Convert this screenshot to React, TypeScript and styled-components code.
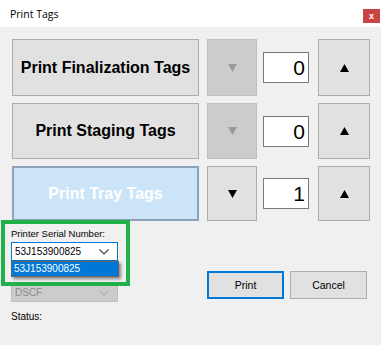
import React from "react";
import styled, { createGlobalStyle } from "styled-components";

const GlobalStyle = createGlobalStyle`
  html, body {
    margin: 0;
    padding: 0;
    background: #f0f0f0;
  }
  * {
    box-sizing: border-box;
  }
`;

interface ICounter {
  label: string;
  value: number;
  active?: boolean;
}

const counters: ICounter[] = [
  { label: "Print Finalization Tags", value: 0 },
  { label: "Print Staging Tags", value: 0 },
  { label: "Print Tray Tags", value: 1, active: true },
];

const Triangle = ({ up, color }: { up?: boolean; color: string }) => (
  <svg width="9" height="8" viewBox="0 0 9 8">
    <polygon points={up ? "4.5,0 9,8 0,8" : "0,0 9,0 4.5,8"} fill={color} />
  </svg>
);

const Chevron = ({ color }: { color: string }) => (
  <svg width="10" height="6" viewBox="0 0 10 6">
    <polyline points="0.5,0.5 5,5 9.5,0.5" fill="none" stroke={color} strokeWidth="1.2" />
  </svg>
);

export default function App() {
  return (
    <>
      <GlobalStyle />
      <Window>
        <TitleBar>
          <Title>Print Tags</Title>
          <CloseButton>x</CloseButton>
        </TitleBar>
        <Body>
          <Rows>
            {counters.map(c => (
              <React.Fragment key={c.label}>
                <BigButton active={c.active}>{c.label}</BigButton>
                <StepButton disabled={!c.active}>
                  <Triangle color={c.active ? "#000" : "#9a9a9a"} />
                </StepButton>
                <CountBox>{c.value}</CountBox>
                <StepButton>
                  <Triangle up color="#000" />
                </StepButton>
              </React.Fragment>
            ))}
          </Rows>
          <Lower>
            <Fields>
              <FieldLabel>Printer Serial Number:</FieldLabel>
              <SelectWrap>
                <Select focused>
                  <span>53J153900825</span>
                  <Chevron color="#444" />
                </Select>
                <DropList>
                  <DropItem>53J153900825</DropItem>
                </DropList>
              </SelectWrap>
              <Select disabled>
                <span>DSCF</span>
                <Chevron color="#b4b4b4" />
              </Select>
              <StatusLabel>Status:</StatusLabel>
            </Fields>
            <Actions>
              <ActionButton focused>Print</ActionButton>
              <ActionButton>Cancel</ActionButton>
            </Actions>
          </Lower>
        </Body>
        <Highlight />
      </Window>
    </>
  );
}

const Window = styled.div`
  position: relative;
  width: 381px;
  height: 345px;
  background: #f0f0f0;
  font-family: "Liberation Sans", Arial, sans-serif;
  overflow: hidden;
`;

const TitleBar = styled.div`
  height: 27px;
  background: #ffffff;
  display: flex;
  align-items: center;
  justify-content: space-between;
  padding: 0 1px 0 10px;
`;

const Title = styled.div`
  font-family: "Open Sans", "Noto Sans", sans-serif;
  font-size: 10.5px;
  color: #000;
  margin-top: 1px;
`;

const CloseButton = styled.div`
  width: 17px;
  height: 14px;
  background: #c94545;
  color: #fff;
  font-size: 9px;
  font-weight: bold;
  display: flex;
  align-items: center;
  justify-content: center;
  margin-top: 4px;
`;

const Body = styled.div`
  padding: 12px 14px 0 12px;
`;

const Rows = styled.div`
  display: grid;
  grid-template-columns: 187px 50px 46px 51px;
  grid-template-rows: 57px 56px 55px;
  column-gap: 8px;
  row-gap: 7px;
  align-items: center;
  & > :nth-child(4n + 3) {
    margin-left: -2px;
  }
  & > :nth-child(4n) {
    margin-left: -1px;
  }
`;

const BigButton = styled.div<{ active?: boolean }>`
  height: 100%;
  display: flex;
  align-items: center;
  justify-content: center;
  font-weight: bold;
  font-size: 16px;
  color: ${p => (p.active ? "#ffffff" : "#000000")};
  background: ${p => (p.active ? "#cce4f7" : "#e1e1e1")};
  border: ${p => (p.active ? "2px solid #8fa3b8" : "1px solid #adadad")};
`;

const StepButton = styled.div<{ disabled?: boolean }>`
  height: 100%;
  display: flex;
  align-items: center;
  justify-content: center;
  background: ${p => (p.disabled ? "#cccccc" : "#e1e1e1")};
  border: 1px solid ${p => (p.disabled ? "#bfbfbf" : "#adadad")};
`;

const CountBox = styled.div`
  width: 46px;
  height: 31px;
  background: #fff;
  border: 1px solid #7a7a7a;
  font-size: 21px;
  text-align: right;
  padding-right: 3px;
  line-height: 29px;
  color: #000;
`;

const Lower = styled.div`
  display: flex;
  padding-top: 6px;
  margin-left: -1px;
`;

const Fields = styled.div`
  width: 108px;
  display: flex;
  flex-direction: column;
`;

const FieldLabel = styled.div`
  font-size: 9.5px;
  color: #000;
  height: 13px;
  line-height: 13px;
  margin-bottom: 2px;
`;

const SelectWrap = styled.div`
  position: relative;
  margin-bottom: 22px;
`;

const Select = styled.div<{ focused?: boolean; disabled?: boolean }>`
  height: 19px;
  display: flex;
  align-items: center;
  justify-content: space-between;
  padding: 0 8px 0 3px;
  font-size: 10px;
  color: ${p => (p.disabled ? "#8a8a8a" : "#000")};
  background: ${p => (p.disabled ? "#cccccc" : "#ffffff")};
  border: 1px solid ${p => (p.focused ? "#0078d7" : p.disabled ? "#bfbfbf" : "#7a7a7a")};
`;

const DropList = styled.div`
  position: absolute;
  left: 0;
  top: 19px;
  width: 108px;
  background: #fff;
  border: 1px solid #646464;
  box-shadow: 2px 2px 3px rgba(0, 0, 0, 0.45);
  z-index: 2;
`;

const DropItem = styled.div`
  height: 14px;
  line-height: 14px;
  padding-left: 2px;
  font-size: 10px;
  color: #fff;
  background: #0078d7;
`;

const StatusLabel = styled.div`
  margin-top: 9px;
  height: 12px;
  line-height: 12px;
  font-size: 10px;
  color: #000;
`;

const Actions = styled.div`
  display: flex;
  gap: 6px;
  margin-left: 89px;
  padding-top: 44px;
  align-items: flex-start;
`;

const ActionButton = styled.div<{ focused?: boolean }>`
  width: 77px;
  height: 28px;
  display: flex;
  align-items: center;
  justify-content: center;
  font-size: 10.5px;
  color: #000;
  background: #e1e1e1;
  border: ${p => (p.focused ? "2px solid #0078d7" : "1px solid #adadad")};
`;

const Highlight = styled.div`
  position: absolute;
  left: 1px;
  top: 220px;
  width: 129px;
  height: 66px;
  border: 4px solid #21b14b;
  pointer-events: none;
  z-index: 3;
`;
